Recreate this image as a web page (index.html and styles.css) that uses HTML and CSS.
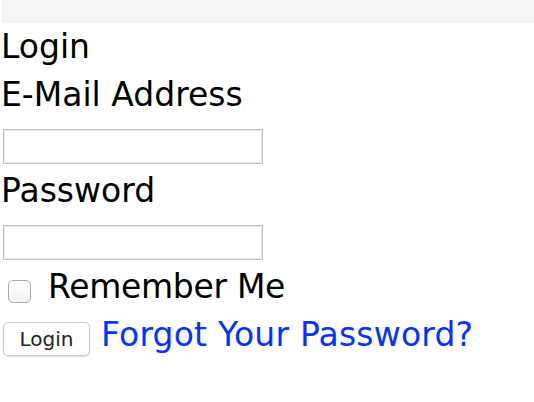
FILE: index.html
```html
<!DOCTYPE html>
<html lang="en">
<head>
    <meta charset="UTF-8">
    <title>Login</title>
    <link rel="stylesheet" href="styles.css">
</head>
<body>
<div class="top-bar"></div>
<div class="login-panel">
    <div class="panel-title">Login</div>
    <form class="login-form">
        <label class="field-label" for="email">E-Mail Address</label>
        <div class="field-row">
            <input type="email" id="email" name="email">
        </div>
        <label class="field-label" for="password">Password</label>
        <div class="field-row">
            <input type="password" id="password" name="password">
        </div>
        <div class="check-row">
            <span class="checkbox"></span>
            <label class="check-label">Remember Me</label>
        </div>
        <div class="action-row">
            <button type="button" class="login-button">Login</button>
            <a href="#" class="forgot-link">Forgot Your Password?</a>
        </div>
    </form>
</div>
</body>
</html>
```

FILE: styles.css
```css
body {
    margin: 0;
    font-family: "DejaVu Sans", sans-serif;
    font-size: 33px;
    line-height: 48px;
    color: #000;
    background: #fff;
}

.top-bar {
    height: 23px;
    margin-left: 2px;
    background-color: #f4f4f4;
}

.panel-title, .field-label {
    display: block;
    height: 48px;
    padding-left: 1px;
}

.login-form {
    margin: 0;
}

.field-row {
    height: 48px;
    padding-top: 10px;
    box-sizing: border-box;
}

.field-row input {
    display: block;
    width: 260px;
    height: 35px;
    margin: 0 0 0 3px;
    padding: 0;
    box-sizing: border-box;
    border: 1px solid #bdbdbd;
    box-shadow: inset 0 0 0 1px #ececec;
    background: #fff;
    outline: none;
}

.check-row {
    display: flex;
    height: 48px;
}

.checkbox {
    width: 23px;
    height: 23px;
    margin: 17px 17px 0 8px;
    box-sizing: border-box;
    border: 1px solid #a9a9a9;
    border-radius: 5px;
    background: linear-gradient(#ffffff, #f4f4f4);
}

.check-label {
    letter-spacing: -0.3px;
}

.action-row {
    display: flex;
    height: 48px;
}

.login-button {
    width: 87px;
    height: 34px;
    margin: 11px 10px 0 3px;
    padding: 0;
    border: 1px solid #c8c8c8;
    border-radius: 5px;
    background: #fff;
    box-shadow: 0 1px 1px rgba(0, 0, 0, 0.12);
    font-family: "DejaVu Sans", sans-serif;
    font-size: 20px;
    line-height: 32px;
    color: #222;
}

.forgot-link {
    margin-left: 1px;
    color: #0433ff;
    text-decoration: none;
    letter-spacing: 0.2px;
}
```
